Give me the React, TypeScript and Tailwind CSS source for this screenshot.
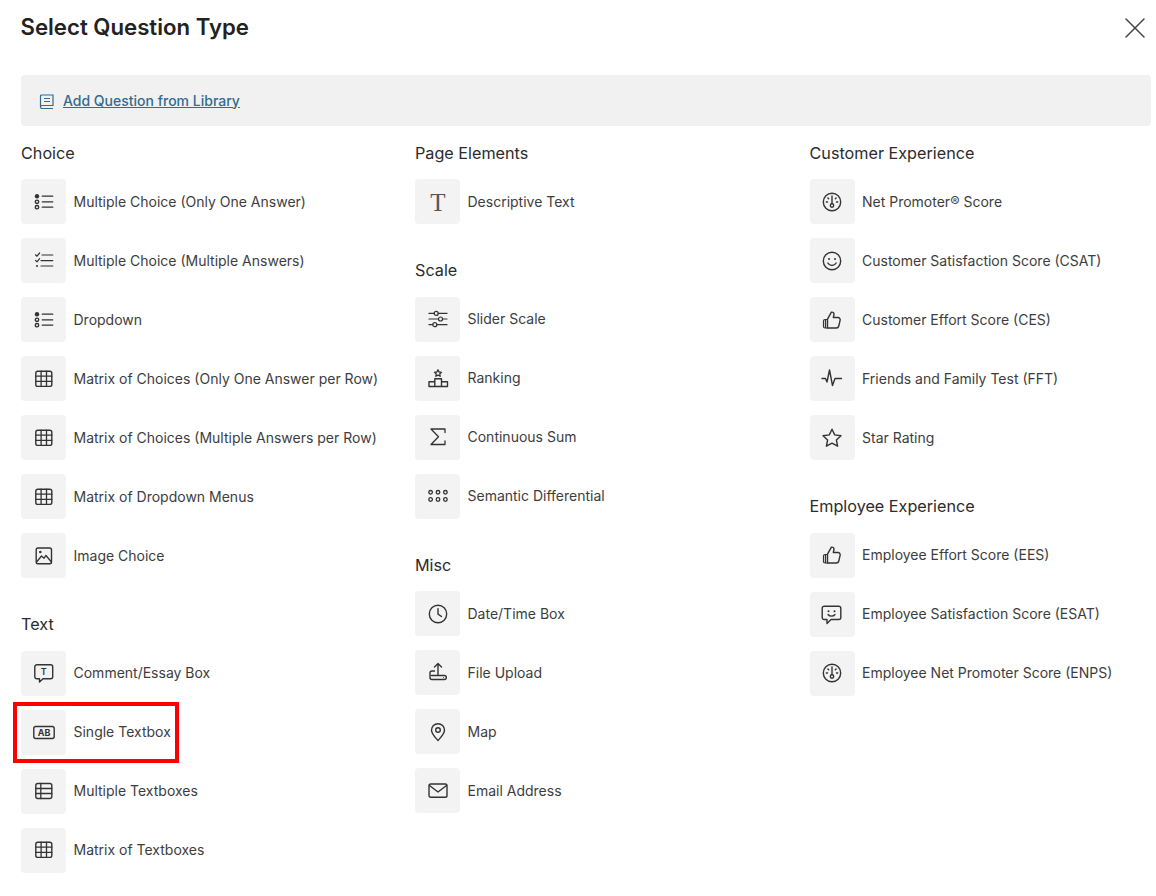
import type { ReactNode } from "react";
import { X } from "lucide-react";

// every icon is drawn on the same 20x20 box
function Ico({ children }: { children: ReactNode }) {
  return (
    <svg
      viewBox="0 0 20 20"
      fill="none"
      stroke="#333"
      strokeWidth="1.4"
      strokeLinecap="round"
      strokeLinejoin="round"
      className="h-5 w-5 overflow-visible"
    >
      {children}
    </svg>
  );
}

const radioList = (
  <Ico>
    <circle cx="3" cy="4.2" r="2.2" fill="#333" stroke="none" />
    <circle cx="3" cy="9.8" r="1.7" />
    <circle cx="3" cy="15.2" r="1.7" />
    <path d="M8.2 4.2h10.6M8.2 9.8h10.6M8.2 15.2h10.6" strokeWidth="1.2" />
  </Ico>
);

const checkList = (
  <Ico>
    <path d="M1.5 3.8l1.5 1.4 2.6-3.2M1.5 9.4l1.5 1.4 2.6-3.2" strokeWidth="1.2" />
    <circle cx="3" cy="15" r="1" fill="#333" stroke="none" />
    <path d="M8 4h10.8M7 9.6h11.8M7 15h11.8" strokeWidth="1.2" />
  </Ico>
);

const grid = (
  <Ico>
    <rect x="1.8" y="2.2" width="16" height="15.2" rx="2" />
    <path d="M7.1 2.2v15.2M12.5 2.2v15.2M1.8 7.2h16M1.8 12.4h16" strokeWidth="1.3" />
  </Ico>
);

const rows = (
  <Ico>
    <rect x="1.8" y="2.5" width="16" height="15" rx="2" />
    <path d="M6.8 2.5v15M1.8 7.5h16M1.8 12.5h16" strokeWidth="1.3" />
  </Ico>
);

const image = (
  <Ico>
    <rect x="2.2" y="2" width="15.3" height="15.7" rx="1.8" />
    <circle cx="6.3" cy="6" r="1.3" fill="#333" stroke="none" />
    <path d="M3 15.5l4.5-5.5 2.5 2.2 2-2.7 5 6" strokeWidth="1.3" />
  </Ico>
);

const commentT = (
  <Ico>
    <path d="M2.8 1.8h13.900a2 2 0 0 1 2 2v10a2 2 0 0 1-2 2H9l-3.500 3.300v-3.300H2.800a2 2 0 0 1-2-2v-10a2 2 0 0 1 2-2z" />
    <text x="9.7" y="12.2" textAnchor="middle" fontSize="9" fontWeight="600" fill="#333" stroke="none" fontFamily="Inter, sans-serif">T</text>
  </Ico>
);

const textbox = (
  <Ico>
    <rect x="-0.2" y="4.5" width="20.4" height="12" rx="2" />
    <text x="10" y="13.8" textAnchor="middle" fontSize="9" fontWeight="700" fill="#333" stroke="none" fontFamily="Inter, sans-serif">AB</text>
  </Ico>
);

const serifT = (
  <Ico>
    <text x="10" y="18.5" textAnchor="middle" fontSize="25" fill="#555" stroke="none" fontFamily="'Liberation Serif', serif">T</text>
  </Ico>
);

const sliders = (
  <Ico>
    <path d="M1 4.4h5.200M10.200 4.400h8.800M1 10h9.500M14.500 10h4.500M1 15.700h3.800M8.800 15.700h10.200" strokeWidth="1.2" />
    <circle cx="8.2" cy="4.4" r="2" strokeWidth="1.2" />
    <circle cx="12.5" cy="10" r="2" strokeWidth="1.2" />
    <circle cx="6.8" cy="15.7" r="2" strokeWidth="1.2" />
  </Ico>
);

const podium = (
  <Ico>
    <path d="M6.8 18.500V10.800h6.700v7.700M6.800 13.800H1v4.700h18.500v-4.700h-6" />
    <path d="M10 1.800l1.100 2.200 2.400.3-1.700 1.600.4 2.400-2.200-1.200-2.200 1.200.4-2.400-1.700-1.600 2.400-.3z" strokeWidth="1.3" />
  </Ico>
);

const sigma = (
  <Ico>
    <path d="M17 5.500V2H3l7.500 7.800L3 17.500h14V14" strokeWidth="1.3" />
  </Ico>
);

const dots = (
  <Ico>
    {[2.6, 10, 17.4].map((x) =>
      [6.3, 13.5].map((y) => <circle key={`${x}-${y}`} cx={x} cy={y} r="1.8" strokeWidth="1.3" />),
    )}
  </Ico>
);

const clock = (
  <Ico>
    <circle cx="10" cy="10" r="8.7" />
    <path d="M10 4.800v5.400l3.500 2.300" />
  </Ico>
);

const upload = (
  <Ico>
    <path d="M10 12V.5M6.500 4L10 .5 13.500 4" />
    <path d="M6.500 8H4a2 2 0 0 0-2 2v4.500a2 2 0 0 0 2 2h12.300a2 2 0 0 0 0-4H3.500" />
    <circle cx="15.5" cy="14.5" r="0.5" fill="#333" stroke="none" />
  </Ico>
);

const pin = (
  <Ico>
    <path d="M10 18.500c-3-3.400-6.500-6.700-6.500-10.300a6.500 6.500 0 0 1 13 0c0 3.600-3.500 6.900-6.500 10.300z" />
    <circle cx="10" cy="8" r="2.3" />
  </Ico>
);

const mail = (
  <Ico>
    <rect x="1" y="3" width="18" height="13.3" rx="1.8" />
    <path d="M1.500 4.500L10 11l8.500-6.500" />
  </Ico>
);

const gauge = (
  <Ico>
    <circle cx="10" cy="10" r="8.7" />
    <path d="M10 4v7.500M4.300 10h1.200M14.500 10h1.200M5.900 6l.8.800M14.100 6l-.800.800" />
    <circle cx="10" cy="13.5" r="1.7" />
  </Ico>
);

const smile = (
  <Ico>
    <circle cx="10" cy="10" r="8.7" />
    <circle cx="7" cy="8" r="1" fill="#333" stroke="none" />
    <circle cx="13" cy="8" r="1" fill="#333" stroke="none" />
    <path d="M5.800 12c1 1.700 2.500 2.500 4.200 2.500s3.200-.8 4.200-2.500" />
  </Ico>
);

const thumb = (
  <Ico>
    <path d="M5.500 18V9.200l3.900-7c1.500-.4 2.600.6 2.600 2.200l-.7 3.100h4.700a2.200 2.200 0 0 1 2.100 2.800l-1.300 5.700a2.600 2.600 0 0 1-2.500 2z" />
    <path d="M5.500 9.500H3A1.500 1.500 0 0 0 1.500 11v5.500A1.500 1.500 0 0 0 3 18h2.500M3.500 10v8" strokeWidth="1.2" />
  </Ico>
);

const pulse = (
  <Ico>
    <path d="M0 9.500h3.500L5 13 7.500 1l3 15.500 2.500-7h6.500" />
  </Ico>
);

const star = (
  <Ico>
    <path d="M10 1.200l2.700 5.700 6.300.8-4.600 4.300 1.200 6.200-5.600-3.100-5.600 3.100 1.200-6.200L1 7.700l6.300-.8z" />
  </Ico>
);

const chatSmile = (
  <Ico>
    <path d="M2.200 2.200h14.600a2 2 0 0 1 2 2v9.300a2 2 0 0 1-2 2H9L5 19.500v-4H2.200a2 2 0 0 1-2-2V4.200a2 2 0 0 1 2-2z" />
    <circle cx="6.5" cy="7.2" r="1" fill="#333" stroke="none" />
    <circle cx="12.5" cy="7.2" r="1" fill="#333" stroke="none" />
    <path d="M6 10.500c.8 1.100 2 1.700 3.500 1.700s2.700-.6 3.500-1.700" strokeWidth="1.3" />
  </Ico>
);

type Item = [ReactNode, string];
type Section = { title: string; items: Item[] };

const columns: Section[][] = [
  [
    {
      title: "Choice",
      items: [
        [radioList, "Multiple Choice (Only One Answer)"],
        [checkList, "Multiple Choice (Multiple Answers)"],
        [radioList, "Dropdown"],
        [grid, "Matrix of Choices (Only One Answer per Row)"],
        [grid, "Matrix of Choices (Multiple Answers per Row)"],
        [grid, "Matrix of Dropdown Menus"],
        [image, "Image Choice"],
      ],
    },
    {
      title: "Text",
      items: [
        [commentT, "Comment/Essay Box"],
        [textbox, "Single Textbox"],
        [rows, "Multiple Textboxes"],
        [grid, "Matrix of Textboxes"],
      ],
    },
  ],
  [
    { title: "Page Elements", items: [[serifT, "Descriptive Text"]] },
    {
      title: "Scale",
      items: [
        [sliders, "Slider Scale"],
        [podium, "Ranking"],
        [sigma, "Continuous Sum"],
        [dots, "Semantic Differential"],
      ],
    },
    {
      title: "Misc",
      items: [
        [clock, "Date/Time Box"],
        [upload, "File Upload"],
        [pin, "Map"],
        [mail, "Email Address"],
      ],
    },
  ],
  [
    {
      title: "Customer Experience",
      items: [
        [gauge, "Net Promoter® Score"],
        [smile, "Customer Satisfaction Score (CSAT)"],
        [thumb, "Customer Effort Score (CES)"],
        [pulse, "Friends and Family Test (FFT)"],
        [star, "Star Rating"],
      ],
    },
    {
      title: "Employee Experience",
      items: [
        [thumb, "Employee Effort Score (EES)"],
        [chatSmile, "Employee Satisfaction Score (ESAT)"],
        [gauge, "Employee Net Promoter Score (ENPS)"],
      ],
    },
  ],
];

export default function App() {
  return (
    <div className="relative h-[896px] w-[1156px] overflow-hidden bg-white font-[Inter,sans-serif] text-[#2b2b2b]">
      <div className="flex h-[75px] items-start justify-between pl-[20.5px] pr-[3.5px]">
        <h1 className="mt-[11px] text-[22.2px] leading-[32px] font-semibold text-[#222]">Select Question Type</h1>
        <X className="mt-[10px] h-[36px] w-[36px] text-[#444]" strokeWidth={1} />
      </div>

      {/* LIBRARY BANNER */}
      <div className="ml-[21px] mr-[5px] flex h-[51px] items-center gap-[8px] rounded bg-[#f1f1f1] pl-[18px]">
        <svg viewBox="0 0 16 16" fill="none" stroke="#336b8f" strokeWidth="1.2" className="h-4 w-4">
          <path d="M1.500 13.500V3a1 1 0 0 1 1-1H14v10.500H3a1.500 1.500 0 0 0 0 3h11" />
          <path d="M5 5.500h6M5 8.500h6" />
        </svg>
        <a href="#library" className="text-sm leading-5 font-medium text-[#336b8f] underline">
          Add Question from Library
        </a>
      </div>

      {/* QUESTION TYPES */}
      <div className="ml-[21px] mt-[14.5px] grid grid-cols-[394px_394.5px_1fr]">
        {columns.map((sections, i) => (
          <div key={i} className="flex flex-col gap-[34px]">
            {sections.map((section) => (
              <section key={section.title}>
                <h2 className="mb-[14.5px] text-[16.2px] leading-6 text-[#2b2b2b]">{section.title}</h2>
                <ul className="flex flex-col gap-[14px]">
                  {section.items.map(([icon, label]) => (
                    <li key={label} className="flex items-center gap-[7.5px]">
                      <span className="flex h-[45px] w-[45px] items-center justify-center rounded bg-[#f3f3f3]">
                        {icon}
                      </span>
                      <span className="text-sm leading-5 text-[#3d3d3d]">{label}</span>
                    </li>
                  ))}
                </ul>
              </section>
            ))}
          </div>
        ))}
      </div>

      {/* red annotation over the screenshot */}
      <div className="absolute left-[13px] top-[702px] h-[61px] w-[166px] border-4 border-[#ff0000]" />
    </div>
  );
}
